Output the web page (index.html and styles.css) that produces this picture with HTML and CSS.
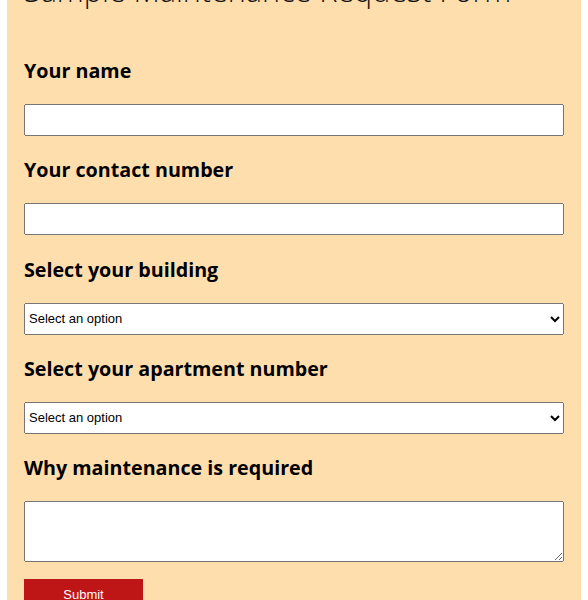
FILE: index.html
```html
<!DOCTYPE html>
<html lang="en">
<head>
<meta charset="utf-8">
<title>Sample Maintenance Request Form</title>
<link rel="stylesheet" href="styles.css">
</head>
<body>
<main class="panel">
  <h1 class="title">Sample Maintenance Request Form</h1>
  <form class="form">
    <div class="field">
      <label class="label" for="name">Your name</label>
      <input class="control" id="name" type="text">
    </div>
    <div class="field">
      <label class="label" for="phone">Your contact number</label>
      <input class="control" id="phone" type="text">
    </div>
    <div class="field">
      <label class="label" for="building">Select your building</label>
      <select class="control select" id="building">
        <option>Select an option</option>
      </select>
    </div>
    <div class="field">
      <label class="label" for="apt">Select your apartment number</label>
      <select class="control select" id="apt">
        <option>Select an option</option>
      </select>
    </div>
    <div class="field">
      <label class="label" for="why">Why maintenance is required</label>
      <textarea class="control area" id="why"></textarea>
    </div>
    <button class="submit" type="button">Submit</button>
  </form>
</main>
</body>
</html>
```

FILE: styles.css
```css
html, body {
  margin: 0;
  padding: 0;
  background: #ffffff;
}

.panel {
  margin: -30px 0 0 7px;
  width: 574px;
  box-sizing: border-box;
  padding: 0 17px 40px;
  background: #ffdead;
  font-family: "Open Sans", "Noto Sans", sans-serif;
  color: #000;
}

.title {
  margin: 0;
  font-size: 30.5px;
  font-weight: 300;
  line-height: 40px;
  color: #111;
}

.form {
  display: flex;
  flex-direction: column;
  padding-top: 27px;
}

.field {
  display: flex;
  flex-direction: column;
  padding-top: 20.25px;
}

.field:first-child {
  padding-top: 20px;
}

.label {
  font-size: 19.7px;
  font-weight: 700;
  line-height: 26px;
  padding-top: 1px;
  margin-bottom: 20px;
}

.control {
  box-sizing: border-box;
  width: 100%;
  height: 32px;
  margin: 0;
  font-family: "Liberation Sans", Arial, sans-serif;
  font-size: 13px;
}

.area {
  height: 61px;
  resize: vertical;
}

.submit {
  align-self: flex-start;
  margin-top: 17px;
  width: 119px;
  height: 30px;
  border: none;
  background: #be1616;
  color: #fff;
  font-family: "Liberation Sans", Arial, sans-serif;
  font-size: 13px;
  padding: 0;
}
```
